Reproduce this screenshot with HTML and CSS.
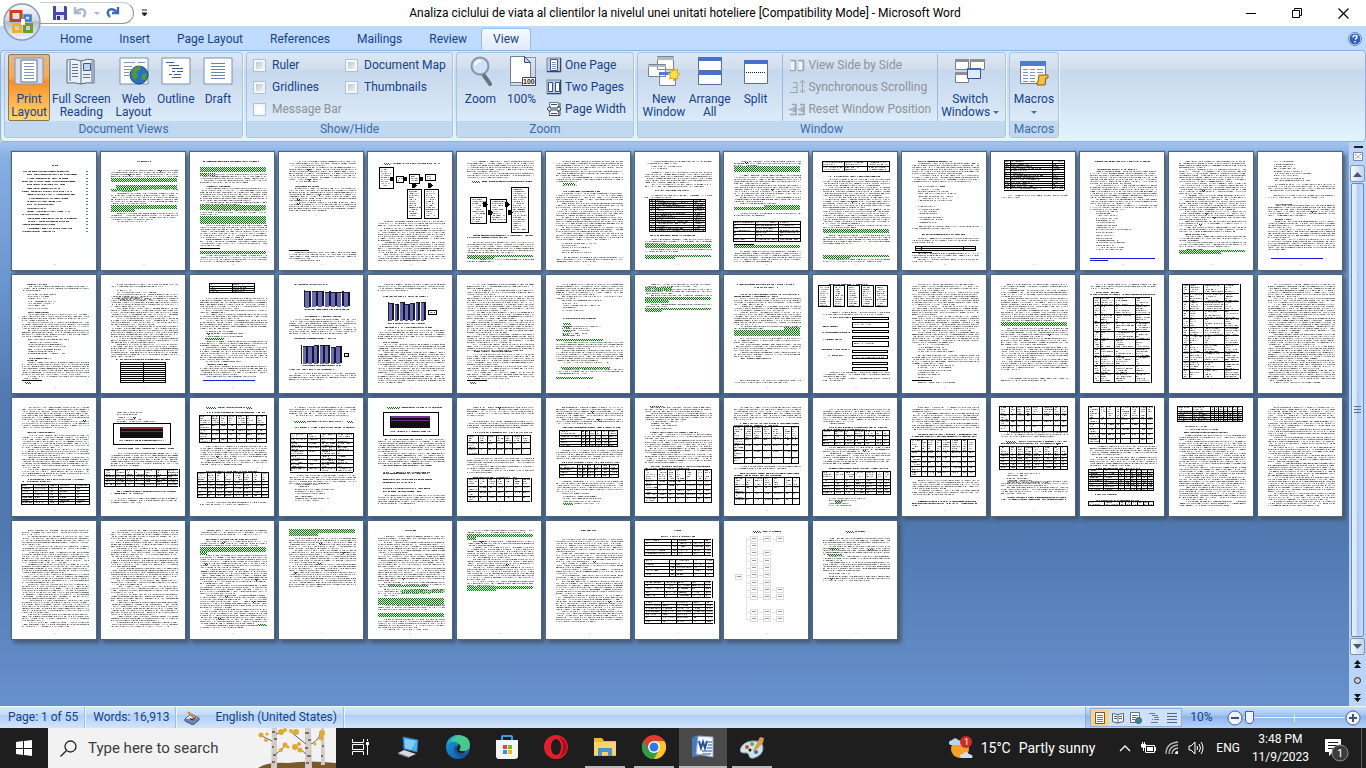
FILE: index.html
```html
<!DOCTYPE html>
<html lang="en">
    <head>
        <meta charset="utf-8">
        <meta name="viewport" content="width=device-width, initial-scale=1.0">
        <title>Analiza ciclului de viata al clientilor la nivelul unei unitati hoteliere - Microsoft Word</title>
        <link rel="stylesheet" href="styles.css">
    </head>
    <body>
        <svg class="defs" width="0" height="0" aria-hidden="true">
            <defs>
                <linearGradient id="steel" x1="0" y1="0" x2="0" y2="1">
                    <stop offset="0" stop-color="#fdfdfe"/>
                    <stop offset="0.45" stop-color="#d3dae3"/>
                    <stop offset="0.5" stop-color="#b2bdcb"/>
                    <stop offset="1" stop-color="#f4f8fc"/>
                </linearGradient>
                <linearGradient id="edge" x1="0" y1="0" x2="1" y2="1">
                    <stop offset="0" stop-color="#1a9de0"/>
                    <stop offset="1" stop-color="#0d4f9e"/>
                </linearGradient>
            </defs>
        </svg>

        <header class="titlebar">
            <div class="quick">
                <button aria-label="Save"><svg width="16" height="16" viewBox="0 0 16 16"><path d="M1 1h13l1 1v13H1z" fill="#4549a8"/><path d="M4 1h8v6H4z" fill="#f1f4fb"/><path d="M4 10h8v5H4z" fill="#d9def0"/><path d="M5 11h3v4H5z" fill="#33377d"/></svg></button>
                <button aria-label="Undo"><svg width="16" height="16" viewBox="0 0 16 16"><path d="M2 2v6h6M3 7q4-4 8-2 3 3-1 7" fill="none" stroke="#a9b8cf" stroke-width="2.400"/></svg></button>
                <span class="caret faded"></span>
                <button aria-label="Redo"><svg width="16" height="16" viewBox="0 0 16 16"><path d="M13 2v6H7M12 7q-4-4-8-2-3 3 1 7" fill="none" stroke="#3a6cb8" stroke-width="2.400"/></svg></button>
            </div>
            <button class="customize" aria-label="Customize"><svg width="7" height="8" viewBox="0 0 7 8"><path d="M1 1h5M1 4h5L3.500 7z" stroke="#222" fill="#222"/></svg></button>
            <h1>Analiza ciclului de viata al clientilor la nivelul unei unitati hoteliere [Compatibility Mode] - Microsoft Word</h1>
            <div class="window-buttons">
                <button aria-label="Minimize"><svg width="11" height="11" viewBox="0 0 11 11"><path d="M0 5.500h10" stroke="#000"/></svg></button>
                <button aria-label="Restore"><svg width="11" height="11" viewBox="0 0 11 11"><path d="M.5 2.500h7v7h-7zM2.500 2.500v-2h7v7h-2" fill="none" stroke="#000"/></svg></button>
                <button aria-label="Close"><svg width="11" height="11" viewBox="0 0 11 11"><path d="M.5.500l10 10M10.500.5l-10 10" stroke="#000" stroke-width="1.200"/></svg></button>
            </div>
        </header>

        <button class="office" aria-label="Office Button">
            <svg width="40" height="40" viewBox="0 0 40 40">
                <circle cx="20" cy="20" r="18" fill="url(#steel)" stroke="#8e9aab" stroke-width="1.500"/>
                <g fill="none" stroke-width="2.500">
                    <path d="M9 9.500h10v9H9z" stroke="#c8421c" stroke-width="3"/>
                    <path d="M22.500 13.500h6v5h-6z" stroke="#3c7cc4"/>
                    <path d="M11.500 22.500h7v7h-7z" stroke="#f0b02a" stroke-width="3"/>
                    <path d="M22.500 22.500h7v7h-7z" stroke="#6f9a2e" stroke-width="3"/>
                </g>
                <path d="M19 17h4v6h-4z" fill="#fff"/>
            </svg>
        </button>

        <nav class="tabs">
            <button>Home</button>
            <button>Insert</button>
            <button>Page Layout</button>
            <button>References</button>
            <button>Mailings</button>
            <button>Review</button>
            <button class="active">View</button>
            <button class="help" aria-label="Help"><svg width="14" height="14" viewBox="0 0 14 14"><circle cx="7" cy="7" r="6" fill="#2c62c4" stroke="#e8f1ff"/><circle cx="7" cy="7" r="6.500" fill="none" stroke="#5b86cc"/><path d="M5 5.500q0-2 2-2t2 1.500q0 1-2 2.500M7 9v1.500" fill="none" stroke="#fff" stroke-width="1.500"/></svg></button>
        </nav>

        <section class="ribbon">
            <fieldset class="group views">
                <div class="tools">
                    <button class="big selected">
                        <svg width="30" height="28" viewBox="0 0 30 28"><path d="M1 1h28v26H1z" fill="#d5dff0" stroke="#8092b5"/><path d="M7 3h16v22H7z" fill="#fff" stroke="#5c6e94"/><path d="M10 6.500h10M10 9.500h10M10 12.500h10M10 15.500h10M10 18.500h10M10 21.500h10" stroke="#8296ba"/></svg>
                        <span>Print<br>Layout</span>
                    </button>
                    <button class="big wide">
                        <svg width="30" height="28" viewBox="0 0 30 28"><path d="M1 3q7-2 14 1 7-3 13-1v23q-7-1-13 1-7-2-14-1z" fill="#e9f0f8" stroke="#54677f"/><path d="M15 4v23M4 4v20M26 4v21" stroke="#54677f"/><path d="M6 7.500h6M6 10.500h6M6 13.500h6M6 16.500h6M6 19.500h6M17 17.500h7M17 20.500h7" stroke="#5d7493"/><path d="M17.500 6.500h7v7h-7z" fill="#bfd4ee" stroke="#365a8a"/></svg>
                        <span>Full Screen<br>Reading</span>
                    </button>
                    <button class="big">
                        <svg width="30" height="28" viewBox="0 0 30 28"><path d="M1 1h28v26H1z" fill="#fff" stroke="#7a90b0"/><path d="M5 5.500h11M5 9.500h8M5 12.500h7M5 15.500h5M5 18.500h5M19 5.500h7" stroke="#8296ba"/><circle cx="20" cy="18" r="9" fill="#2f6fc0" stroke="#1d4a86"/><path d="M13 13q4-4 9-4l-1 4-4 2 2 4-3 4q-4-3-3-10zM24 17l4-1q0 5-3 8l-3-3z" fill="#4f9a3a"/></svg>
                        <span>Web<br>Layout</span>
                    </button>
                    <button class="big">
                        <svg width="30" height="28" viewBox="0 0 30 28"><path d="M1 1h28v26H1z" fill="#fff" stroke="#7a90b0"/><path d="M5 5.500h8M8 8.500h10M11 11.500h11M11 14.500h3M16 14.500h6M8 17.500h3M13 17.500h7M11 20.500h9" stroke="#3d5f92"/></svg>
                        <span>Outline</span>
                    </button>
                    <button class="big">
                        <svg width="30" height="28" viewBox="0 0 30 28"><path d="M1 1h28v26H1z" fill="#fff" stroke="#7a90b0"/><path d="M8 6.500h14M8 9.500h14M8 12.500h14M8 15.500h14M8 18.500h14M8 21.500h14" stroke="#6d83a8"/></svg>
                        <span>Draft</span>
                    </button>
                </div>
                <legend>Document Views</legend>
            </fieldset>

            <fieldset class="group show">
                <div class="tools checks">
                    <label><input type="checkbox">Ruler</label>
                    <label><input type="checkbox">Document Map</label>
                    <label><input type="checkbox">Gridlines</label>
                    <label><input type="checkbox">Thumbnails</label>
                    <label class="off"><input type="checkbox" disabled>Message Bar</label>
                </div>
                <legend>Show/Hide</legend>
            </fieldset>

            <fieldset class="group zoom">
                <div class="tools">
                    <button class="big">
                        <svg width="30" height="30" viewBox="0 0 30 30"><path d="M17 18l7 10" stroke="#69727f" stroke-width="4" stroke-linecap="round"/><circle cx="14" cy="10" r="8.500" fill="#cfe0f8" stroke="#8494aa" stroke-width="2"/><path d="M9 9q1-4 6-4" stroke="#fff" stroke-width="2" fill="none"/></svg>
                        <span>Zoom</span>
                    </button>
                    <button class="big">
                        <svg width="30" height="30" viewBox="0 0 30 30"><path d="M3.500 1.500h25v28h-25z" fill="none" stroke="#445" stroke-dasharray="1 1"/><path d="M3.500.500h14l6 6v20h-20z" fill="#fff" stroke="#6e7f9b"/><path d="M17.500.5v6h6z" fill="#c9d6e8" stroke="#34527f"/><path d="M15.500 21.500h13v8h-13z" fill="#fff" stroke="#445"/><text x="16" y="28" font-size="7" font-family="Liberation Sans, sans-serif" font-weight="bold" fill="#222">100</text></svg>
                        <span>100%</span>
                    </button>
                    <div class="stack">
                        <button class="small"><svg width="16" height="16" viewBox="0 0 16 16"><path d="M1 1h14v14H1z" fill="#b9cbe3" stroke="#7389ab"/><path d="M4.500 2.500h7v11h-7z" fill="#fff" stroke="#3c5a8a"/><path d="M6 5.500h4M6 7.500h4M6 9.500h4M6 11.500h4" stroke="#8296ba"/><path d="M14.500 1v13.500H1" stroke="#33455f" fill="none"/></svg>One Page</button>
                        <button class="small"><svg width="16" height="16" viewBox="0 0 16 16"><path d="M1 1h14v14H1z" fill="#b9cbe3" stroke="#7389ab"/><path d="M2.500 3.500h4v9h-4zM9.500 3.500h4v9h-4z" fill="#fff" stroke="#33507e"/><path d="M14.500 1v13.500H1" stroke="#33455f" fill="none"/></svg>Two Pages</button>
                        <button class="small"><svg width="16" height="16" viewBox="0 0 16 16"><path d="M3.500 1.500h9v13h-9z" fill="#fff" stroke="#6c7f9c"/><path d="M5 3.500h6M5 12.500h6M3 14.500h11V2" stroke="#445" fill="none"/><path d="M1 8l3-3v2h8V5l3 3-3 3V9H4v2z" fill="#dfe9f7" stroke="#33455f"/></svg>Page Width</button>
                    </div>
                </div>
                <legend>Zoom</legend>
            </fieldset>

            <fieldset class="group window">
                <div class="tools">
                    <button class="big">
                        <svg width="32" height="30" viewBox="0 0 32 30"><path d="M9.500.500h16v13h-16zM.5 8.500h17v12H.5zM11.500 16.500h16v13h-16z" fill="#fff" stroke="#77849a"/><path d="M9 1h17v3H9zM0 9h18v2H0z" fill="#b8b9bd"/><path d="M11 16h12v3H11z" fill="#4f7cd0"/><path d="M26 12l1 3 3-2-1 4 3 1-3 2 1 3-3-1-1 3-1-3-4 1 2-3-3-2 3-1-2-4 4 2z" fill="#ffe24a" stroke="#d8ac1a"/></svg>
                        <span>New<br>Window</span>
                    </button>
                    <button class="big">
                        <svg width="26" height="30" viewBox="0 0 26 30"><path d="M1.500 1.500h23v13h-23zM1.500 16.500h23v12h-23z" fill="#fdfeff" stroke="#5c6f96"/><path d="M1 1h24v4H1zM1 15h24v4H1z" fill="#4672cc"/></svg>
                        <span>Arrange<br>All</span>
                    </button>
                    <button class="big">
                        <svg width="26" height="30" viewBox="0 0 26 30"><path d="M1.500 4.500h23v23h-23z" fill="#fdfeff" stroke="#5c6f96"/><path d="M1 4h24v4H1z" fill="#4672cc"/><path d="M3 16.500h20" stroke="#222" stroke-dasharray="1 1"/></svg>
                        <span>Split</span>
                    </button>
                    <div class="stack ruled">
                        <button class="small" disabled><svg width="16" height="16" viewBox="0 0 16 16"><path d="M1.500 3.500h5v10M9.500 3.500h5v10M1 13.500h5M9 13.500h5" fill="none" stroke="#9ba3ad" stroke-width="1.500"/><path d="M2 5h3v8H2zM10 5h3v8h-3z" fill="#f2f5f9"/></svg>View Side by Side</button>
                        <button class="small" disabled><svg width="16" height="16" viewBox="0 0 16 16"><path d="M1 13.500h8M4 3.500h4v10M4 8.500h4M13.500 2v11M11 4l2.500-3L16 4M11 11l2.500 3 2.500-3" fill="none" stroke="#9ba3ad"/></svg>Synchronous Scrolling</button>
                        <button class="small" disabled><svg width="16" height="16" viewBox="0 0 16 16"><path d="M3 3.500h4v10H1M11 3.500h4v10H9M0 8.500h5M9 8.500h4M4 6l3 2.500L4 11M12 6l3 2.500-3 2.500" fill="none" stroke="#9ba3ad" stroke-width="1.500"/></svg>Reset Window Position</button>
                    </div>
                    <button class="big switch">
                        <svg width="30" height="28" viewBox="0 0 30 28"><path d="M.5 2.500h13v10H.5zM15.500 2.500h14v10h-14zM.5 15.500h13v10H.5z" fill="#fff" stroke="#7b7f88"/><path d="M0 2h14v3H0zM15 2h15v3H15zM0 15h14v3H0z" fill="#8e8f93"/><path d="M12.500 11.500h13v10h-13z" fill="#dcebff" stroke="#34558e"/><path d="M12 11h14v2H12z" fill="#3c69c0"/></svg>
                        <span>Switch<br>Windows <i class="caret"></i></span>
                    </button>
                </div>
                <legend>Window</legend>
            </fieldset>

            <fieldset class="group macros">
                <div class="tools">
                    <button class="big">
                        <svg width="30" height="30" viewBox="0 0 30 30"><path d="M1.500 5.500h25v22h-25z" fill="#fff" stroke="#5f7db5"/><path d="M1 5h26v5H1z" fill="#4f7ccf"/><path d="M4 13.500h5M11 13.500h5M18 13.500h6M4 16.500h5M11 16.500h5M18 16.500h6M4 19.500h5M11 19.500h5M4 22.500h5M11 22.500h5M4 25.500h5M11 25.500h5" stroke="#8496b4"/><path d="M20 19h9v3h-2l-1 7h-8v-3h1z" fill="#f2c04a" stroke="#8c6514"/></svg>
                        <span>Macros<br><i class="caret"></i></span>
                    </button>
                </div>
                <legend>Macros</legend>
            </fieldset>
        </section>

        <main class="workspace">
            <div id="pages"></div>
            <div class="scrollbar">
                <button aria-label="View Ruler"><svg width="12" height="16" viewBox="0 0 12 16"><path d="M2 1h9" stroke="#222" stroke-width="2"/><path d="M1.500 6.500h9v8h-9z" fill="#fff" stroke="#6f87ad"/><path d="M3 8l6 5M9 8l-6 5" stroke="#5b6a80" stroke-dasharray="1 1"/></svg></button>
                <button class="arrow" aria-label="Scroll Up"><svg width="9" height="6" viewBox="0 0 9 6"><path d="M0 6l4.500-5L9 6z" fill="#4a586e"/></svg></button>
                <div class="thumb"><span></span></div>
                <button class="arrow" aria-label="Scroll Down"><svg width="9" height="6" viewBox="0 0 9 6"><path d="M0 0l4.500 5L9 0z" fill="#4a586e"/></svg></button>
                <button aria-label="Previous Page"><svg width="7" height="8" viewBox="0 0 7 8"><path d="M0 4l3.500-4L7 4zM0 8l3.500-4L7 8z" fill="#111"/></svg></button>
                <button aria-label="Select Browse Object"><svg width="7" height="7" viewBox="0 0 7 7"><circle cx="3.500" cy="3.500" r="3" fill="#c9ced6" stroke="#222"/></svg></button>
                <button aria-label="Next Page"><svg width="7" height="8" viewBox="0 0 7 8"><path d="M0 0l3.500 4L7 0zM0 4l3.500 4L7 4z" fill="#111"/></svg></button>
            </div>
        </main>

        <footer class="status">
            <button>Page: 1 of 55</button>
            <button>Words: 16,913</button>
            <button class="lang"><svg width="16" height="14" viewBox="0 0 16 14"><path d="M1 8l6-5 8 4-6 6z" fill="#fff" stroke="#41547c"/><path d="M1 8v2l8 4 6-5V7" fill="#6d83b4" stroke="#41547c"/><path d="M4 1l7 7" stroke="#c98a3c" stroke-width="2"/><path d="M6 7l2 2 4-3" fill="none" stroke="#222"/></svg>English (United States)</button>
            <div class="right">
                <div class="modes">
                    <button class="on" aria-label="Print Layout"><svg width="12" height="12" viewBox="0 0 12 12"><path d="M1.500.500h9v11h-9z" fill="#fff" stroke="#6b5a3c"/><path d="M3 3.500h6M3 5.500h6M3 7.500h6M3 9.500h6" stroke="#7d7668"/></svg></button>
                    <button aria-label="Full Screen Reading"><svg width="12" height="12" viewBox="0 0 12 12"><path d="M.5 1.500l5 1 6-1v8l-6 1.500-5-1.500z" fill="#fff" stroke="#4f6078"/><path d="M6 2v9M2 4.500h3M2 6.500h3M7 4.500h3M7 6.500h3" stroke="#4f6078"/></svg></button>
                    <button aria-label="Web Layout"><svg width="12" height="12" viewBox="0 0 12 12"><path d="M.5.500h9v10h-9z" fill="#fff" stroke="#5f7088"/><path d="M2 3.500h6M2 5.500h4M2 7.500h3" stroke="#5f7088"/><circle cx="8.500" cy="8.500" r="3" fill="#3a82a8" stroke="#2d6a54"/></svg></button>
                    <button aria-label="Outline"><svg width="12" height="12" viewBox="0 0 12 12"><path d="M1 1.500h6M4 3.500h6M6 5.500h5M4 7.500h1M6 7.500h5M3 10.500h7" stroke="#66788f"/></svg></button>
                    <button aria-label="Draft"><svg width="12" height="12" viewBox="0 0 12 12"><path d="M1 1.500h10M1 4.500h10M1 7.500h10M1 10.500h10" stroke="#55667e"/></svg></button>
                </div>
                <button class="percent">10%</button>
                <button class="round" aria-label="Zoom Out"><svg width="16" height="16" viewBox="0 0 16 16"><circle cx="8" cy="8" r="7" fill="#eef4fc" stroke="#4a6390"/><path d="M4 8h8" stroke="#3f5274" stroke-width="2"/></svg></button>
                <input type="range" min="0" max="100" value="0" aria-label="Zoom">
                <button class="round" aria-label="Zoom In"><svg width="16" height="16" viewBox="0 0 16 16"><circle cx="8" cy="8" r="7" fill="#eef4fc" stroke="#4a6390"/><path d="M4 8h8M8 4v8" stroke="#3f5274" stroke-width="2"/></svg></button>
            </div>
        </footer>

        <div class="taskbar">
            <button class="start" aria-label="Start"><svg width="16" height="16" viewBox="0 0 16 16"><path d="M0 2l7-1v7H0zM8 1l8-1v8H8zM0 9h7v6l-7-1zM8 9h8v7l-8-1z" fill="#fff"/></svg></button>
            <div class="search">
                <svg class="lens" width="17" height="17" viewBox="0 0 17 17"><circle cx="10.500" cy="6.500" r="5.500" fill="none" stroke="#222" stroke-width="1.300"/><path d="M6.500 10.500L.5 16.500" stroke="#222" stroke-width="1.300"/></svg>
                <input type="text" placeholder="Type here to search" aria-label="Type here to search">
                <svg class="trees" width="78" height="40" viewBox="0 0 78 40">
                    <path d="M0 40q8-6 30-5 20-3 48 0v5z" fill="#7a5a2c"/>
                    <path d="M14 0h5v40h-6zM47 0h6l1 40h-7zM63 0h3l1 37h-4z" fill="#d3cbc6"/>
                    <path d="M14 4h3M16 11h3M14 19h2M15 27h3M14 34h3M47 5h4M50 12h3M47 20h3M49 28h4M48 35h3M63 8h2M64 18h2M63 28h2" stroke="#5a4c44" stroke-width="1.500"/>
                    <path d="M14 13L4 8M18 26l9-8M18 6l8-3M48 16l-9-7-6-5M48 26l-7-6M53 16q6-2 10-11" stroke="#6b5e6a" fill="none"/>
                    <g fill="#dfa938"><circle cx="3" cy="7" r="2.500"/><circle cx="8" cy="12" r="2"/><circle cx="9" cy="6" r="1.500"/><circle cx="23" cy="4" r="3"/><circle cx="27" cy="2" r="2"/><circle cx="27" cy="17" r="2.500"/><circle cx="23" cy="22" r="2"/><circle cx="30" cy="19" r="1.500"/><circle cx="33" cy="3" r="2"/><circle cx="38" cy="4" r="3"/><circle cx="37" cy="19" r="3"/><circle cx="42" cy="22" r="2.500"/><circle cx="41" cy="16" r="2"/><circle cx="64" cy="5" r="3"/><circle cx="63" cy="10" r="2.500"/><circle cx="57" cy="16" r="1.500"/></g>
                </svg>
            </div>
            <div class="apps">
                <button aria-label="Task View"><svg width="18" height="16" viewBox="0 0 18 16"><path d="M1.500 0v3.500h11V0M1.500 16v-3.500h11V16M1.500 5.500h11v5h-11zM16.500 0v2M16.500 6v10" fill="none" stroke="#fff"/><path d="M15 3h3v3h-3z" fill="#fff"/></svg></button>
                <button aria-label="Remote Desktop"><svg width="24" height="22" viewBox="0 0 24 22"><path d="M6 1l15 3-1 12-13-3z" fill="#4db1ec" stroke="#2c6fae"/><path d="M8 3l11 2-5 9-6-2z" fill="#7fcdf8"/><path d="M1 17l6-3 12 4-7 3z" fill="#d6dade"/><path d="M1 17l11 4v1L1 18z" fill="#8d949c"/></svg></button>
                <button aria-label="Edge"><svg width="24" height="24" viewBox="0 0 24 24"><circle cx="12" cy="12" r="12" fill="url(#edge)"/><path d="M1 9Q4 0 13 0q11 1 11 10 0 6-7 6-4 0-4-2 2-2 0-5Q8 4 1 9z" fill="#47c98b"/><path d="M1 9Q3 1 12 0 6 3 5 7z" fill="#22a6d8"/><path d="M8 13q0 8 9 9 3-1 5-4-6 2-9-1-2-2-1-5-4-2-4 1z" fill="#1b4f9c"/><path d="M13 9q3 3 0 6 2 2 6 1-2 4-7 1-3-4 1-8z" fill="#1e1e1e"/></svg></button>
                <button aria-label="Store"><svg width="24" height="24" viewBox="0 0 24 24"><path d="M7 6V2q0-1 1-1h8q1 0 1 1v4" fill="none" stroke="#3aa0dc" stroke-width="2"/><path d="M1 5h22v16q0 3-3 3H4q-3 0-3-3z" fill="#f5f5f5"/><path d="M8 10h4v4H8z" fill="#e0452c"/><path d="M13 10h4v4h-4z" fill="#7cb52c"/><path d="M8 15h4v4H8z" fill="#2a98d8"/><path d="M13 15h4v4h-4z" fill="#f2b51c"/></svg></button>
                <button aria-label="Opera"><svg width="24" height="24" viewBox="0 0 24 24"><path fill-rule="evenodd" d="M12 0a12 12 0 1 0 0 24 12 12 0 1 0 0-24zM12 4q5 1 5 8t-5 8q-5-1-5-8t5-8z" fill="#e0202c"/><path d="M15 2q8 3 8 10t-8 10q4-4 4-10T15 2z" fill="#a80f1e"/></svg></button>
                <button class="open" aria-label="File Explorer"><svg width="24" height="20" viewBox="0 0 24 20"><path d="M1 1h8l2 3h12v15H1z" fill="#f0b83a"/><path d="M1 5h22v13H1z" fill="#fbd567"/><path d="M5 11h14v8h-4v-4H9v4H5z" fill="#4a93d4"/></svg></button>
                <button class="open" aria-label="Chrome"><svg width="24" height="24" viewBox="0 0 24 24"><circle cx="12" cy="12" r="12" fill="#e33b2e"/><path d="M1.600 6A12 12 0 0 0 12 24l5-9-10 0z" fill="#2f9e4b"/><path d="M12 24A12 12 0 0 0 22.400 6H12l5 9z" fill="#fbc727"/><circle cx="12" cy="12" r="6" fill="#fff"/><circle cx="12" cy="12" r="4.500" fill="#2f78e8"/></svg></button>
                <button class="open current" aria-label="Word"><svg width="24" height="24" viewBox="0 0 24 24"><path d="M1 3q3-3 8-2v20l-8 1z" fill="#4b78bb"/><path d="M7 1l15 1v20L5 19z" fill="#f4f7fb" stroke="#8ba3c8"/><path d="M8 6l2 7 2-6 2 6 2-7" fill="none" stroke="#24519c" stroke-width="2"/><path d="M17 7h4M17 10h4M16 13h5M11 16h10M11 19h9" stroke="#24519c"/></svg></button>
                <button class="open" aria-label="Paint"><svg width="24" height="24" viewBox="0 0 24 24"><path d="M12 6q11-1 11 7 0 7-9 10-5 1-5-3-1-3-5-2-4 0-4-3 2-8 12-9z" fill="#cfe4ea" stroke="#8a9ea6"/><circle cx="7" cy="12" r="2" fill="#d8483c"/><circle cx="12" cy="9" r="2" fill="#5fb04a"/><circle cx="16" cy="17" r="2" fill="#2e6fb8"/><circle cx="10" cy="15" r="1.500" fill="#1e1e1e"/><path d="M20 2l4 1-1 5-9 9-1-1z" fill="#d79a52"/></svg></button>
            </div>
            <div class="tray">
                <button class="weather">
                    <svg width="25" height="24" viewBox="0 0 25 24"><circle cx="12" cy="13" r="9" fill="#f5a02c"/><path d="M2 9q-3-4 2-5 4-4 7 1 4 1 2 4z" fill="#b9d3f2"/><path d="M13 22q-3-4 2-4 3-4 6 0 5 1 3 4z" fill="#cfdff5"/><circle cx="18" cy="6" r="6" fill="#cf2b24"/><text x="16" y="9" font-size="9" fill="#fff" font-family="Roboto, sans-serif">1</text></svg>
                    <span>15°C</span><span>Partly sunny</span>
                </button>
                <button aria-label="Hidden icons"><svg width="12" height="8" viewBox="0 0 12 8"><path d="M1 7l5-5 5 5" fill="none" stroke="#fff" stroke-width="1.300"/></svg></button>
                <button aria-label="Battery"><svg width="16" height="12" viewBox="0 0 16 12"><path d="M5.500 3.500h9v7h-9z" fill="none" stroke="#fff"/><path d="M7 5h6v4H7zM15 5h1v4h-1zM1 2h5v3L4 6v3H3V6L1 5zM2 0h1v2H2zM4 0h1v2H4z" fill="#fff"/></svg></button>
                <button aria-label="Network"><svg width="14" height="14" viewBox="0 0 14 14"><path d="M1 13Q1 2 13 1M4 13q0-8 9-9M7 13q0-5 6-6" fill="none" stroke="#bbb" stroke-width="1.300"/><path d="M10 13q0-3 3-3v3z" fill="#fff"/></svg></button>
                <button aria-label="Volume"><svg width="16" height="14" viewBox="0 0 16 14"><path d="M1 5h2l4-4v12L3 9H1z" fill="none" stroke="#fff"/><path d="M9 5q1 2 0 4M11 3q3 4 0 8M13 1q4 6 0 12" fill="none" stroke="#fff"/></svg></button>
                <button class="input-lang">ENG</button>
                <button class="clock">3:48 PM<br>11/9/2023</button>
                <button class="notes" aria-label="Notifications"><svg width="25" height="24" viewBox="0 0 25 24"><path d="M1 1h16v13H9l-4 4v-4H1z" fill="#fff"/><path d="M4 4.500h10M4 7.500h10M4 10.500h7" stroke="#1e1e1e"/><circle cx="16" cy="15" r="8" fill="#3c3c3c" stroke="#8c8c8c"/><text x="13" y="19" font-size="11" fill="#fff" font-family="Roboto, sans-serif">1</text></svg></button>
            </div>
        </div>
        <script src="pages.js"></script>
    </body>
</html>
```
FILE: styles.css
```css
* {
    box-sizing: border-box;
}
body {
    display: flex;
    flex-direction: column;
    height: 100vh;
    margin: 0;
    overflow: hidden;
    background-color: #bfdbff;
    color: #15428b;
    font-family: Roboto, "Open Sans", sans-serif;
    font-size: 12px;
    line-height: 13px;
}
button {
    display: flex;
    align-items: center;
    justify-content: center;
    margin: 0;
    padding: 0;
    border: none;
    background: none;
    color: inherit;
    font: inherit;
}
svg {
    display: block;
    flex: none;
}
.defs {
    position: absolute;
}
.caret {
    display: inline-block;
    border: 3px solid transparent;
    border-top-color: #56688a;
    border-bottom: none;
    vertical-align: middle;
}
.faded {
    border-top-color: #aab4c4;
}

/* title bar */
.titlebar {
    display: flex;
    align-items: center;
    height: 26px;
    background-color: #fff;
}
.quick {
    display: flex;
    align-items: center;
    gap: 5px;
    height: 22px;
    margin-left: 40px;
    padding: 0 12px;
    border: 1px solid #8f98a8;
    border-top-color: #c5cad3;
    border-left: none;
    border-radius: 0 11px 11px 0;
}
.customize {
    width: 20px;
}
.titlebar h1 {
    flex: 1;
    margin: 0;
    padding-right: 12px;
    color: #000;
    font-size: 12px;
    font-weight: normal;
    text-align: center;
    white-space: nowrap;
}
.window-buttons {
    display: flex;
}
.window-buttons button {
    width: 46px;
    height: 24px;
}
.office {
    position: absolute;
    top: 2px;
    left: 2px;
}

/* tabs */
.tabs {
    display: flex;
    height: 24px;
    padding: 2px 4px 0 47px;
}
.tabs button {
    padding: 0 14px 0 13px;
}
.tabs .active {
    padding: 0 11px;
    border: 1px solid #9cbbe3;
    border-bottom: none;
    border-radius: 3px 3px 0 0;
    background: linear-gradient(#f6faff, #e1eaf6);
}
.tabs .help {
    margin-left: auto;
    padding: 0;
}

/* ribbon */
.ribbon {
    display: flex;
    gap: 3px;
    padding: 1px 3px 3px;
    border: 1px solid #8db2e3;
    border-radius: 4px;
    background: linear-gradient(#dee8f5, #d3deee 18%, #c7d8ed 22%, #d5e4f4 60%, #e3f4ff);
}
.group {
    display: flex;
    flex-direction: column;
    min-width: 0;
    margin: 0;
    padding: 0;
    border: 1px solid #a9c3e2;
    border-radius: 3px;
    box-shadow: 1px 1px 0 #eef6ff;
}
.group legend {
    float: left;
    order: 2;
    width: 100%;
    height: 16px;
    padding: 0;
    background-color: #c1d8f1;
    color: #3e6aaa;
    line-height: 16px;
    text-align: center;
}
.tools {
    display: flex;
    height: 68px;
    padding: 1px 3px 0;
}
.views { width: 239px; }
.show { width: 207px; }
.zoom { width: 178px; }
.window { width: 369px; }
.macros { width: 50px; }
.big {
    flex-direction: column;
    justify-content: flex-start;
    flex: 1 1 42px;
    padding-top: 2px;
    white-space: nowrap;
}
.big svg {
    height: 30px;
}
.big span {
    margin-top: 7px;
}
.wide {
    flex-basis: 62px;
}
.selected {
    border: 1px solid #8b7654;
    border-radius: 2px;
    background: linear-gradient(#dfb98c, #f8a84f 35%, #fb8f26 40%, #ffd676);
    padding-top: 1px;
}
.checks {
    display: grid;
    grid-template-columns: 92px auto;
    grid-auto-rows: 22px;
    padding-left: 6px;
}
.checks label {
    display: flex;
    align-items: center;
    gap: 6px;
    white-space: nowrap;
}
.checks input {
    width: 13px;
    height: 13px;
    margin: 0;
    border: 1px solid #abc1de;
    background: linear-gradient(135deg, #b4bcc8, #fbfbfb);
    box-shadow: inset 0 0 0 2px #f4f7fb;
    appearance: none;
}
.checks .off,
.small:disabled {
    color: #8d9199;
}
.checks .off input {
    background: #fff;
}
.stack {
    display: flex;
    flex-direction: column;
}
.small {
    justify-content: flex-start;
    gap: 3px;
    height: 22px;
    padding: 0 4px;
    white-space: nowrap;
}
.ruled {
    margin-left: 4px;
    padding: 0 2px;
    border-left: 1px solid #9cb8dc;
    border-right: 1px solid #9cb8dc;
}
.switch {
    flex-basis: 60px;
}

/* document area */
.workspace {
    display: flex;
    flex: 1;
    min-height: 0;
    background: linear-gradient(#a3c3ee, #86afe2 3%, #6b95cd 25%, #5279b2 45%, #5079b0 70%, #6791cd);
}
#pages {
    display: grid;
    flex: 1;
    grid-template-columns: repeat(auto-fill, 84px);
    grid-auto-rows: 118px;
    align-content: start;
    gap: 5px;
    padding: 10px 0 0 12px;
}
.page {
    background-color: #fff;
    box-shadow: 0 0 1px 1px #4d6685, 3px 3px 4px 1px rgba(60, 68, 80, 0.7);
    shape-rendering: crispEdges;
}
.scrollbar {
    display: flex;
    flex-direction: column;
    width: 17px;
    background-color: #bcd5f6;
}
.scrollbar button {
    height: 17px;
}
.scrollbar button:first-child {
    height: 23px;
}
.scrollbar .arrow {
    margin: 0 1px;
    border: 1px solid #7a97c2;
    border-radius: 2px;
    background: linear-gradient(90deg, #f4f8fd, #c3d3ea);
}
.thumb {
    display: flex;
    align-items: center;
    justify-content: center;
    flex: 1;
    margin: 1px 2px;
    border: 1px solid #6789bd;
    border-radius: 2px;
    background: linear-gradient(90deg, #eaf3ff, #cfe2fb 45%, #aecbf3 50%, #c9dffb);
}
.thumb span {
    width: 7px;
    height: 8px;
    background: repeating-linear-gradient(#5673a3 0 1px, transparent 1px 3px);
}

/* status bar */
.status {
    display: flex;
    height: 22px;
    border-top: 1px solid #f1f7ff;
    background: linear-gradient(#dbe8fb, #c5dbf9 35%, #b0cff7 40%, #d3e4fa);
}
.status > button {
    padding: 0 6px 0 8px;
    border-right: 1px solid #9dbce6;
    box-shadow: 1px 0 0 #eef5ff;
    white-space: nowrap;
}
.status .lang {
    gap: 15px;
}
.right {
    display: flex;
    align-items: center;
    margin-left: auto;
    padding: 0 5px 0 4px;
    border-left: 1px solid #8fb0dd;
    background: linear-gradient(#cadefa, #a3c3f0 40%, #8db4ea 45%, #b5d2f8);
}
.modes {
    display: flex;
    border: 1px solid #90b0dc;
    background-color: #cfe1f8;
}
.modes button {
    width: 18px;
    height: 17px;
}
.modes .on {
    background-color: #fbd28a;
}
.percent {
    width: 45px;
    padding-right: 6px;
}
.status input {
    width: 102px;
    height: 16px;
    margin: 0;
    background: linear-gradient(#eef5ff, #eef5ff) center / 100% 1px no-repeat, linear-gradient(#eef5ff, #eef5ff) center / 1px 8px no-repeat;
    appearance: none;
}
.status input::-webkit-slider-thumb {
    width: 9px;
    height: 13px;
    margin-left: 2px;
    border: 1px solid #4a6390;
    border-radius: 1px 1px 5px 5px;
    background-color: #eef4fc;
    appearance: none;
}

/* taskbar */
.taskbar {
    display: flex;
    height: 40px;
    background-color: #1e1e1e;
    color: #fff;
}
.start {
    width: 48px;
}
.search {
    display: flex;
    align-items: center;
    width: 288px;
    background-color: #f2f2f2;
}
.lens {
    margin-left: 12px;
}
.search input {
    flex: 1;
    min-width: 0;
    height: 38px;
    padding: 0 0 0 11px;
    border: none;
    background: none;
    font: 15px Roboto, sans-serif;
}
.search input::placeholder {
    color: #3c3c3c;
}
.apps {
    display: flex;
    gap: 1px;
}
.apps button {
    width: 48px;
    padding-top: 2px;
    padding-bottom: 2px;
    border-bottom: 2px solid transparent;
}
.apps .open {
    background: linear-gradient(#b9b9b9, #b9b9b9) center bottom / 40px 2px no-repeat;
    background-origin: border-box;
    background-clip: border-box;
}
.apps .current {
    border-bottom-color: #b9b9b9;
    background: #4a4a4a;
}
.tray {
    display: flex;
    gap: 9px;
    margin-left: auto;
    padding-right: 4px;
    white-space: nowrap;
}
.weather {
    gap: 8px;
    margin-right: 15px;
    font-size: 14px;
}
.input-lang {
    padding-left: 3px;
}
.clock {
    margin: 0 6px 0 3px;
    line-height: 18px;
}
.notes {
    padding: 4px 12px 0 0;
    border-right: 1px solid #5a5a5a;
}
```
FILE: pages.js
```js
// One line per page, drawn on a 252x354 sheet.
// p: paragraph y1 y2, l: list y1 y2, i: contents y1 y2, h: heading y x1 x2,
// g: marked text y1 y2 [x1 x2], k: squiggle x y [w], t: table x y w h cols rows,
// b: box x y w h, r: rule y, u: link y x1 x2, c: bar chart x y w h, m: framed chart x y w h colour,
// a: arrow x y, f: tree x y
var pages = [
    "h 40 115 143;i 57 243",
    "h 28 107 148;p 54 78;g 78 90;g 98 110 45 228;p 110 118 110 228;g 110 116 30 110;p 122 156;g 158 170;g 170 178 30 100;p 182 212;k 175 54;k 80 66",
    "h 28 40 210;g 46 62;g 62 72 30 78;p 66 90;h 103 48 120;p 108 158;g 158 172;p 174 192;g 193 217;p 220 284;r 287;g 297 307;p 308 327",
    "p 28 92;h 103 48 120;p 108 178;k 85 52;k 88 82;k 53 140;k 53 153;k 118 126;r 293;p 300 327",
    "k 48 34 18;h 34 70 215;b 32 44 45 66;b 83 71 25 20;b 122 65 33 30;b 170 67 34 22;b 117 110 44 90;b 167 110 44 90;h 164 117 161;h 170 167 211;a 72 81;a 111 81;a 159 81;a 138 100;a 186 100;p 208 220;p 227 327",
    "p 28 80;k 46 88 24;h 88 75 225;b 38 134 52 81;b 98 140 52 72;b 161 104 55 138;a 85 158;a 100 182;a 150 158;a 160 182;h 250 48 228;h 256 30 150;p 270 300;g 308 314;g 314 320 30 110;p 320 328",
    "p 28 90;k 50 92 36;p 98 104;h 118 50 160;p 124 237;p 242 264;l 272 305;p 315 327",
    "p 28 36;l 42 54;p 60 106;h 115 60 160;p 128 140;t 42 140 168 97 18,114,36 15;h 248 45 180;p 262 276;g 277 290;p 291 302;g 308 320 30 120;g 308 314 120 228",
    "p 28 42;g 42 60;p 68 155;k 62 30;k 140 112;g 158 166 120 228;g 166 176;p 183 192;t 26 206 201 61 33,35,32 6;r 275;g 280 290;p 297 327",
    "t 26 26 201 30 33,35,32 2;h 72 45 200;p 82 230;k 115 148;k 182 172;g 232 245;p 250 278;g 308 314 30 228;g 314 320 30 110;p 320 328",
    "h 28 48 150;p 34 90;l 103 150;l 163 185;l 195 212;p 223 232;h 245 60 190;p 257 270;t 38 281 181 12 10,70,20 2;r 299;p 304 327",
    "t 38 25 180 88 10,70,20 13;p 128 136",
    "h 28 45 210;h 50 50 170;p 56 172;l 176 240;l 250 297;u 317 31 225;u 323 31 85",
    "p 28 240;h 245 48 110;p 251 282;k 98 113;k 108 182;k 132 195;k 90 215;h 290 50 100;g 294 300;g 300 307 30 155",
    "l 28 90;p 97 118;p 128 140;h 155 50 100;p 160 192;k 160 178;h 200 50 100;p 206 292;u 317 40 195",
    "h 28 45 105;p 34 50;l 56 102;h 112 45 110;p 118 185;l 193 240;h 248 50 115;h 256 45 75;p 262 310;r 314;k 40 320 18",
    "p 28 36;l 44 74;p 58 245;h 253 45 205;t 58 260 134 60 50,50 10",
    "t 58 25 134 27 50,50 4;p 70 112;p 118 130;p 136 162;l 168 188;k 52 174;g 190 195 45 100;p 198 262;h 267 50 110;p 274 305;u 316 40 195",
    "h 28 45 145;c 75 45 135 52;h 122 75 185;p 132 178;h 188 45 170;c 67 210 118 56;b 194 235 16 12;h 283 30 170;p 295 315",
    "p 28 45;h 62 45 180;c 60 80 110 58;b 180 105 26 14;h 155 50 195;p 165 190;h 200 45 90;p 208 325",
    "p 28 226;h 228 50 165;p 236 310;r 314;k 40 320 18",
    "p 28 72;l 76 110;h 130 50 150;k 52 145 24;l 152 182;k 52 154 20;k 52 166 24;k 52 178 18;g 192 198 30 170;p 202 262;g 275 280 45 190;p 281 298;g 305 311 30 140",
    "p 28 36;g 37 50 30 110;p 42 66;g 66 74;g 74 82 30 100;p 86 98;g 98 110 30 80;g 98 104 80 228",
    "h 28 40 215;h 35 90 160;h 56 48 225;h 62 30 160;p 68 160;g 165 182;g 156 166 180 228;p 188 248;h 250 48 140;p 315 325",
    "h 28 45 165;b 15 31 38 67;b 60 31 36 67;b 102 31 38 67;b 144 31 38 67;b 187 31 40 67;p 110 122;h 125 50 190;b 116 127 112 6;b 116 140 112 17;b 116 165 112 9;b 116 182 112 9;b 116 197 112 18;b 118 224 109 9;b 118 240 109 12;b 118 260 109 10;b 118 275 109 12;h 152 30 75;h 170 24 110;h 192 30 85;h 221 24 112;h 240 45 88;p 292 304;p 310 320",
    "p 28 210;l 215 235;p 240 265;l 270 308;r 314;p 320 326",
    "p 28 140;g 142 155;p 160 210;k 172 176;p 216 285;p 310 320",
    "p 28 44;h 50 48 115;h 56 30 225;t 40 65 172 255 11,25,36,28 10",
    "t 40 27 172 281 11,25,36,28 11",
    "p 28 322",
    "p 28 90;h 103 45 130;p 110 232;k 212 65;h 243 48 215;h 250 30 115;t 26 259 204 60 18,22,15,25,20 7",
    "l 42 74;k 95 56;m 35 76 175 66 #7a2f38;h 150 50 225;p 166 205;t 10 214 223 50 14,14,12,14,15,15,16 5;h 280 48 225;h 286 30 125;p 300 315",
    "k 48 27 28;h 27 84 165;k 168 27 18;h 42 48 225;t 26 52 201 80 18,13,12,13,14,15,15 5;p 145 200;k 78 175;h 218 45 205;t 20 223 213 75 14,12,12,13,14,13,12,10 6;p 313 320",
    "p 28 55;k 45 68 34;h 68 84 190;k 205 68 18;h 88 48 228;t 32 106 189 115 28,20,26,26 9;p 230 255;l 258 310",
    "k 56 27 38;h 27 100 220;m 45 43 167 72 #713092;p 122 195;h 200 45 190;h 222 45 185;h 226 45 180;h 244 45 190;h 252 45 140;h 270 45 185;h 280 45 160;p 292 320",
    "p 28 54;p 68 90;k 122 27;h 103 48 225;t 31 112 188 57 17,14,14,13,14,14,14 3;p 180 210;p 216 225;h 237 48 180;t 31 240 190 68 17,14,14,13,14,14,14 4",
    "p 28 80;k 135 40;k 152 64;h 88 48 225;t 40 96 173 49 37,7,7,11,11,11,16 5;p 155 185;h 191 48 225;t 38 198 178 40 31,8,8,12,13,13,15 4;p 250 290;l 294 318;g 314 319 50 80",
    "g 25 32 45 85;p 28 64;l 68 94;h 102 45 190;p 108 196;h 204 48 225;h 210 30 160;t 27 213 201 98 20,15,12,14,17,10,12 6",
    "p 28 65;h 76 48 225;h 82 30 160;t 26 84 196 110 17,13,15,14,18,12,11 5;p 205 215;h 226 48 225;h 232 30 170;t 29 237 196 80 17,13,15,14,18,12,11 4",
    "p 34 78;h 86 48 225;h 92 30 160;t 26 96 201 46 18,15,15,15,17,10,10 4;p 148 200;k 150 155;h 210 48 225;t 26 219 205 68 18,15,15,15,17,10,10 6;l 300 325;g 310 316 65 85",
    "p 28 98;h 108 48 225;h 114 30 225;t 25 123 194 110 16,9,13,10,14,17,9,12 6;p 245 292;h 308 48 225;h 314 30 225;h 320 30 55",
    "t 25 24 203 74 15,9,13,10,16,17,10,10 4;p 102 118;k 45 128 30;h 128 80 228;h 134 30 215;k 195 134;t 25 144 203 70 15,10,11,13,16,14,11,10 6;l 225 262;p 250 290;h 296 48 225;h 302 30 225",
    "t 25 24 196 110 17,10,14,7,16,14,11,11 6;p 145 172;p 178 205;h 210 48 180;t 25 214 194 62 23,23,9,9,9,9,9,9 9;h 287 45 110;h 306 48 175;t 25 310 194 12 24,24,9,9,9,9,8,8 1",
    "t 25 24 194 46 22,28,7,6,7,7,7,8,8 6;l 85 92;h 103 45 180;p 110 322",
    "p 28 322",
    "p 28 315",
    "p 28 320",
    "p 28 44;h 55 48 200;p 60 76;g 78 92;g 92 100 30 50;p 102 318;k 95 62;k 45 130;k 195 174;k 105 226;k 185 240;k 85 292;g 310 316 205 228",
    "g 24 36;g 36 44 30 115;p 50 195;k 120 66;k 188 92;k 118 126;k 44 152",
    "h 28 110 145;p 45 195;k 102 170;g 193 199 60 180;g 204 216 100 228;p 204 226;g 230 250;p 252 268;g 275 288;p 294 325",
    "p 28 34;g 38 48;g 48 57 30 55;p 60 192;k 70 60;k 148 128;g 194 202;g 202 210 30 115",
    "h 28 105 150;p 55 305;k 140 120;k 185 240",
    "h 28 118 138;h 45 78 178;t 28 53 202 50 40,9,22,18,11 5;t 28 115 206 50 36,8,27,18,11 5;t 28 180 202 48 29,19,21,20,11 5;t 28 240 208 65 24,21,24,19,12 7",
    "k 88 30 24;h 30 114 172;f 65 44",
    "k 100 30 24;h 30 126 156;p 52 70;p 76 100;k 48 82 28;k 165 84 18;g 100 106 45 85;p 104 150;l 156 162;p 166 178;k 50 170"
];

var seed = 7;
function rand(from, to) {
    seed = (seed * 16807) % 2147483647;
    return from + seed % (to - from + 1);
}

// three units are one screen pixel
function snap(n) {
    return Math.round(n / 3) * 3;
}

function rect(x, y, w, h, fill) {
    return `<rect x="${snap(x)}" y="${snap(y)}" width="${Math.max(3, snap(w))}" height="${Math.max(3, snap(h))}" fill="${fill}"/>`;
}

// a row of tiny words
function words(x1, x2, y, dark) {
    let out = '';
    let tones = dark ? ['#666', '#444', '#888', '#aaa'] : ['#c4c4c4', '#a0a0a0', '#b4b4b4', '#8a8a8a', '#666', '#d4d4d4'];
    for (let x = snap(x1); x < x2; x += 3) {
        if (rand(0, 6) > 0) {
            out += rect(x, y, 3, 3, tones[rand(0, tones.length - 1)]);
        }
    }
    return out;
}

function paragraph(y1, y2) {
    let out = '';
    let left = rand(3, 7);
    let indent = 18;
    for (let y = snap(y1); y <= y2; y += 6) {
        left--;
        let last = left == 0 || y + 6 > y2;
        out += words(31 + indent, last ? rand(80, 210) : 229, y);
        indent = 0;
        if (left == 0) {
            left = rand(3, 8);
            indent = 18;
        }
    }
    return out;
}

// green checks over the marked lines
function marked(y1, y2, x1 = 30, x2 = 228) {
    let out = rect(x1, y1, x2 - x1, y2 - y1, '#cfe6cf');
    let odd = 0;
    for (let y = snap(y1); y < snap(y1) + snap(y2 - y1); y += 3) {
        for (let x = snap(x1) + odd; x < x2; x += 6) {
            out += rect(x, y, 3, 3, '#177317');
        }
        odd = 3 - odd;
    }
    return out;
}

function squiggle(x, y, w) {
    let out = '';
    for (let i = 0; i < w; i += 3) {
        out += rect(x + i, y + (i % 6 ? 3 : 0), 3, 3, w > 12 ? '#176b17' : '#222');
    }
    return out;
}

function table(x, y, w, h, cols, rows) {
    let out = '';
    let widths = cols.split(',').map(Number);
    let sum = widths.reduce((a, b) => a + b);
    let head = rows < 8 && rows > 1 && widths.length > 5 ? h / 3 : h / rows;
    let tops = [y];
    for (let i = 0; i < rows; i++) {
        tops.push(rows == 1 ? y + h : y + head + (h - head) * i / (rows - 1));
    }
    let left = x;
    for (let col of widths) {
        let cw = col / sum * w;
        for (let i = 0; i < rows; i++) {
            for (let ty = snap(tops[i]) + 3; ty < tops[i + 1] - 2; ty += 6) {
                if (i == 0 || left == x || cw > 40 || ty < tops[i] + 5) {
                    out += words(left + 5, left + Math.max(8, Math.min(cw - 4, rand(8, cw | 0))), ty);
                }
            }
        }
        out += rect(left, y, 3, h, '#000');
        left += cw;
    }
    out += rect(x + w, y, 3, h + 3, '#000');
    for (let top of tops) {
        out += rect(x, top, w, 3, '#000');
    }
    return out;
}

function frame(x, y, w, h, color) {
    return rect(x, y, w, h, color) + rect(snap(x) + 3, snap(y) + 3, snap(w) - 6, snap(h) - 6, '#fff');
}

function box(x, y, w, h) {
    let out = frame(x, y, w, Math.max(h, 9), '#000');
    for (let ty = snap(y) + 6; ty < y + h - 5; ty += 6) {
        out += words(x + 6, x + rand(w >> 1, w - 5), ty);
    }
    return out;
}

function bars(x, y, w, h) {
    let out = '';
    let step = w / 7;
    for (let i = 0; i < 7; i++) {
        let bx = x + 4 + i * step;
        let top = y + rand(2, 9);
        out += rect(bx, top, step - 6, y + h - top, '#6a6ab4');
        out += rect(bx + step - 7, top - 3, 6, y + h - top, '#15152e');
        out += rect(bx, top - 2, step - 4, 3, '#222');
    }
    return out + rect(x, y, 3, h, '#222') + words(x, x + w, y + h + 5, true);
}

function framed(x, y, w, h, color) {
    let out = frame(x, y, w, h, '#000');
    out += rect(x + 21, y + 10, w - 46, h / 2, '#111');
    out += rect(x + 24, y + 12, w - 50, 6, color);
    out += rect(x + 24, y + 24, w - 50, 3, color);
    return out + words(x + 18, x + w - 20, y + h - 16, true);
}

function tree(x, y) {
    let out = rect(x, y + 8, 3, 244, '#e4e4e4');
    [3, 1, 2, 2, 2, 2, 2, 3, 3, 0, 3, 3].forEach((cells, i) => {
        for (let j = 0; j < cells; j++) {
            let bx = x + 12 + j * 39;
            let by = y + i * 22;
            out += frame(bx, by, 24, 18, '#dcdcdc') + rect(bx + 6, by + 6, 12, 3, '#999') + rect(bx - 12, by + 9, 12, 3, '#e4e4e4');
        }
    });
    return out + frame(x - 32, y + 115, 22, 18, '#dcdcdc') + rect(x - 26, y + 121, 12, 3, '#999');
}

function draw(item) {
    let a = item.split(' ');
    let n = a.map(Number);
    let out = '';
    switch (a[0]) {
        case 'p':
            return paragraph(n[1], n[2]);
        case 'l':
            for (let y = n[1]; y <= n[2]; y += 7) {
                out += words(48, rand(90, 170), y);
            }
            return out;
        case 'i':
            for (let y = n[1]; y <= n[2]; y += 10) {
                out += words(rand(0, 3) ? 44 : 31, rand(100, 195), y, true) + rect(223, y, 5, 3, '#777');
            }
            return out;
        case 'h':
            return words(n[2], n[3], n[1], true);
        case 'g':
            return marked(n[1], n[2], n[3], n[4]);
        case 'k':
            return squiggle(n[1], n[2], n[3] || 9);
        case 't':
            return table(n[1], n[2], n[3], n[4], a[5], n[6]);
        case 'b':
            return box(n[1], n[2], n[3], n[4]);
        case 'r':
            return rect(31, n[1], 60, 3, '#000');
        case 'u':
            return rect(n[2], n[1], n[3] - n[2], 3, '#1a1ad0');
        case 'c':
            return bars(n[1], n[2], n[3], n[4]);
        case 'm':
            return framed(n[1], n[2], n[3], n[4], a[5]);
        case 'a':
            return `<path d="M${n[1] - 6} ${n[2] - 7}h9l5 7-5 7h-9z" fill="#000"/>`;
        case 'f':
            return tree(n[1], n[2]);
    }
}

document.getElementById('pages').innerHTML = pages.map(page =>
    '<svg class="page" viewBox="0 0 252 354">' + page.split(';').map(draw).join('') + rect(125, 336, 5, 3, '#ddd') + '</svg>'
).join('');
```
